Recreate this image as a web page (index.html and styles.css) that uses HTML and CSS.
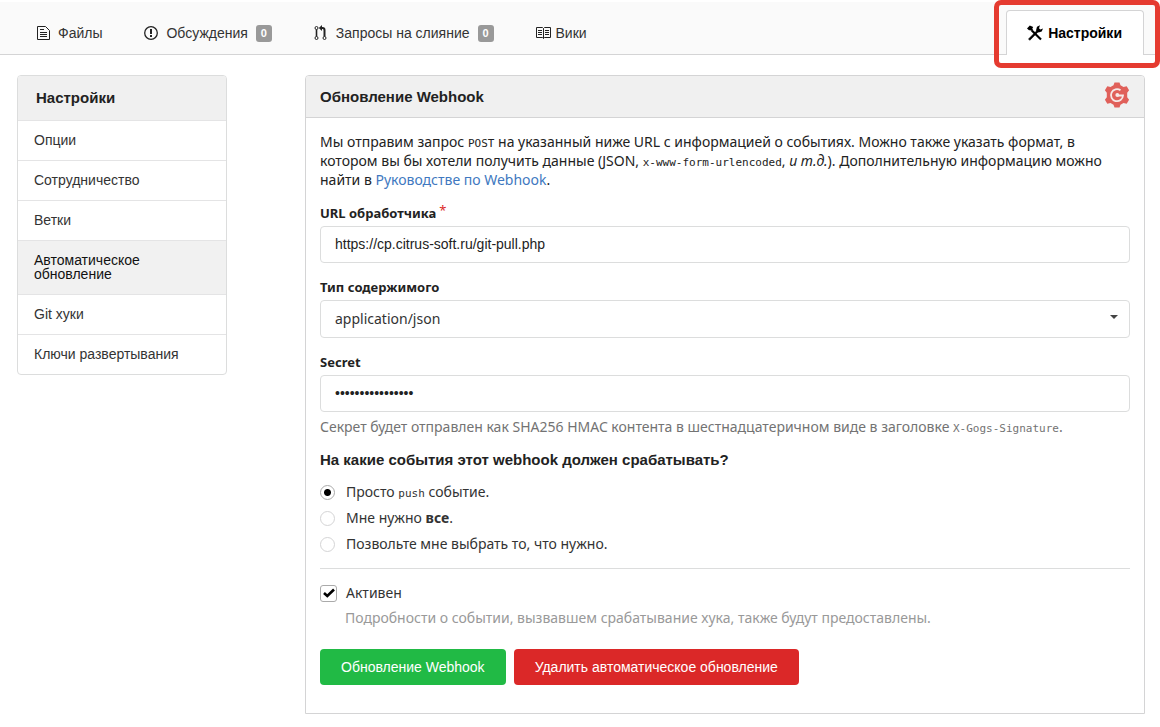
FILE: index.html
```html
<!DOCTYPE html>
<html lang="ru">
<head>
<meta charset="utf-8">
<title>Обновление Webhook</title>
<link rel="stylesheet" href="styles.css">
</head>
<body>
<nav class="repo-nav">
  <a class="nav-item" href="#"><svg class="icon" width="13" height="16" viewBox="0 0 13 16" fill="none" stroke="#222" stroke-width="1"><path d="M.5 1.500h8l4 4v9H.5z"/><path d="M3 4.500h4M3 7.500h7M3 9.500h7M3 11.500h7"/></svg>Файлы</a>
  <a class="nav-item" href="#"><svg class="icon" width="14" height="16" viewBox="0 0 14 16"><circle cx="7" cy="8" r="6.300" fill="none" stroke="#222" stroke-width="1.300"/><path d="M6 4h2v5H6zM6 10h2v2H6z" fill="#222"/></svg>Обсуждения<span class="badge">0</span></a>
  <a class="nav-item" href="#"><svg class="icon" width="14" height="16" viewBox="0 0 14 16" fill="none" stroke="#222"><circle cx="2.500" cy="3" r="1.500"/><circle cx="2.500" cy="13" r="1.500"/><circle cx="10.500" cy="13" r="1.500"/><path d="M2.500 4.500v7" stroke-width="1.600"/><path d="M10.500 11.500V5q0-2-2-2H7.500" stroke-width="2"/><path d="M8 0v6L4.800 3z" fill="#222" stroke="none"/></svg>Запросы на слияние<span class="badge">0</span></a>
  <a class="nav-item wiki" href="#"><svg class="icon" width="15" height="16" viewBox="0 0 15 16" fill="none" stroke="#222"><path d="M.5 2.500h6l1 1 1-1h6v10h-6l-1 1-1-1h-6zM7.500 3.500v10M2 5.500h4M2 7.500h4M2 9.500h4M9 5.500h4M9 7.500h4M9 9.500h4"/></svg>Вики</a>
  <a class="nav-item active" href="#"><svg class="icon" width="16" height="16" viewBox="0 0 16 16"><path d="M1.500 14 10 5.500l1.500 1L2.800 15.300z" fill="#000" stroke="#000" stroke-width=".6"/><path d="M9 5.500 10 1.800 13 .3 12 3.200l1.300 1.300L16 3.400 14.700 6.500 11.500 7.500z" fill="#000"/><path d="M0 3.400 2.800.6 6.200 2 5.300 3.500 6 4.600 4.400 6 3.300 5.300 2 5.300z" fill="#000"/><path d="M4.800 5.500 14 14.500" stroke="#000" stroke-width="2.200"/></svg>Настройки</a>
  <span class="highlight"></span>
</nav>

<main class="layout">
  <aside class="menu">
    <h2 class="menu-title">Настройки</h2>
    <a class="menu-item" href="#">Опции</a>
    <a class="menu-item" href="#">Сотрудничество</a>
    <a class="menu-item" href="#">Ветки</a>
    <a class="menu-item active" href="#">Автоматическое обновление</a>
    <a class="menu-item" href="#">Git хуки</a>
    <a class="menu-item" href="#">Ключи развертывания</a>
  </aside>

  <section class="panel">
    <header class="panel-head">
      <h1 class="heading">Обновление Webhook</h1>
      <svg class="logo" width="26" height="28" viewBox="0 0 26 28"><path d="M10.500 1.500h5l1 2.700 3 1.700 3.200-.7 2.400 4-1.900 2.500v4.600l1.900 2.500-2.400 4-3.200-.7-3 1.700-1 2.700h-5l-1-2.700-3-1.700-3.200.7-2.400-4 1.900-2.500v-4.600L.9 9.200l2.400-4 3.200.7 3-1.700z" fill="#e0605a"/><path d="M16.500 9.300A6 6 0 1 0 19 14.500h-5" fill="none" stroke="#f6e9e8" stroke-width="1.800"/><circle cx="13.300" cy="14" r="1.900" fill="#f6e9e8"/></svg>
    </header>
    <form class="panel-body">
      <p class="intro">Мы отправим запрос <code>POST</code> на указанный ниже URL с информацией о событиях. Можно также указать формат, в котором вы бы хотели получить данные (JSON, <code>x-www-form-urlencoded</code>, <em>и т.д.</em>). Дополнительную информацию можно найти в <a class="link" href="#">Руководстве по Webhook</a>.</p>

      <div class="field">
        <label class="label" for="url">URL обработчика<span class="required">*</span></label>
        <input class="control" id="url" type="text" value="https://cp.citrus-soft.ru/git-pull.php">
      </div>
      <div class="field">
        <label class="label" for="type">Тип содержимого</label>
        <div class="select-wrap">
          <select class="control select" id="type"><option>application/json</option></select>
          <svg class="caret" width="8" height="4" viewBox="0 0 8 4"><path d="M0 0h8L4 4z" fill="#444"/></svg>
        </div>
      </div>
      <div class="field">
        <label class="label" for="secret">Secret</label>
        <input class="control" id="secret" type="password" value="abcdefghijklmnop">
        <p class="help">Секрет будет отправлен как SHA256 HMAC контента в шестнадцатеричном виде в заголовке <code>X-Gogs-Signature</code>.</p>
      </div>

      <fieldset class="events">
        <legend class="heading">На какие события этот webhook должен срабатывать?</legend>
        <label class="choice"><input class="radio" type="radio" name="events" checked><span>Просто <code>push</code> событие.</span></label>
        <label class="choice"><input class="radio" type="radio" name="events"><span>Мне нужно <strong>все</strong>.</span></label>
        <label class="choice"><input class="radio" type="radio" name="events"><span>Позвольте мне выбрать то, что нужно.</span></label>
      </fieldset>

      <div class="active-field">
        <label class="choice"><span class="check-wrap"><input class="check" type="checkbox" checked><svg class="tick" width="12" height="10" viewBox="0 0 12 10"><path d="M1 5l3.300 3L11 1.500" fill="none" stroke="#000" stroke-width="2.600"/></svg></span><span>Активен</span></label>
        <p class="hint">Подробности о событии, вызвавшем срабатывание хука, также будут предоставлены.</p>
      </div>

      <div class="actions">
        <button class="button green" type="button">Обновление Webhook</button>
        <button class="button red" type="button">Удалить автоматическое обновление</button>
      </div>
    </form>
  </section>
</main>
</body>
</html>
```
FILE: styles.css
```css
* { box-sizing: border-box; }

body {
  margin: 0;
  background: #fff;
  color: #222;
  font: 14px/19px "Noto Sans", "Segoe UI", sans-serif;
}

h1, h2, p { margin: 0; }
a { text-decoration: none; }
code { font: 11px "DejaVu Sans Mono", monospace; }

.repo-nav {
  position: relative;
  display: flex;
  align-items: flex-end;
  gap: 42px;
  height: 53px;
  margin-top: 2px;
  padding: 0 16px 0 37px;
  background: #fafafa;
  border-bottom: 1px solid #d4d4d5;
  font-family: "Liberation Sans", Arial, sans-serif;
}

.nav-item {
  display: flex;
  align-items: center;
  gap: 8px;
  height: 42px;
  color: #333;
  white-space: nowrap;
}

.nav-item.wiki { gap: 5px; }

.nav-item.active {
  gap: 5px;
  height: 45px;
  margin: 0 0 -1px auto;
  padding: 0 21px 0 20px;
  background: #fff;
  border: 1px solid #d4d4d5;
  border-bottom: 0;
  border-radius: 4px 4px 0 0;
  color: #000;
  font-weight: bold;
}

.icon { flex: none; }

.badge {
  width: 16px;
  background: #999;
  border-radius: 3px;
  color: #fff;
  font-size: 11px;
  font-weight: bold;
  line-height: 17px;
  text-align: center;
}

.highlight {
  position: absolute;
  top: -2px;
  right: 0;
  width: 166px;
  height: 68px;
  border: 5px solid #e53b30;
  border-radius: 7px;
  pointer-events: none;
}

.layout {
  display: grid;
  grid-template-columns: 210px 1fr;
  gap: 78px;
  align-items: start;
  padding: 20px 15px 13px 17px;
}

.menu {
  border: 1px solid #dcdddd;
  border-radius: 4px;
  overflow: hidden;
  font-family: "Liberation Sans", Arial, sans-serif;
}

.menu-title {
  padding: 12px 18px 13px;
  background: #f0f0f0;
  font-size: 15px;
  line-height: 19px;
}

.menu-item {
  display: block;
  padding: 12px 16px 13px;
  border-top: 1px solid #e4e4e5;
  color: #333;
  line-height: 14px;
}

.menu-item.active {
  background: #f1f1f1;
  color: #111;
}

.panel {
  border: 1px solid #d4d4d5;
  border-radius: 4px 4px 0 0;
}

.panel-head {
  display: flex;
  align-items: center;
  justify-content: space-between;
  height: 42px;
  padding: 0 14px;
  background: #f0f0f0;
  border-bottom: 1px solid #d4d4d5;
  border-radius: 3px 3px 0 0;
}

.logo { margin-bottom: 3px; }

.heading {
  padding: 0;
  font: bold 15px/19px "Liberation Sans", Arial, sans-serif;
}

.panel-body { padding: 14px 14px 28px; }
.intro { margin-bottom: 14px; }
.link { color: #4078c0; }
.field { margin-bottom: 14px; }

.label {
  display: block;
  margin-bottom: 2px;
  font-size: 13px;
  font-weight: bold;
  line-height: 21px;
}

.required {
  margin-left: 3px;
  color: #db2828;
  font-weight: normal;
  vertical-align: 3px;
  line-height: 1px;
}

.control {
  display: block;
  width: 100%;
  height: 37px;
  padding: 0 14px 2px;
  background: #fff;
  border: 1px solid #dcdddd;
  border-radius: 4px;
  color: #222;
  font: 14px "Liberation Sans", Arial, sans-serif;
}

.select-wrap { position: relative; }

.select {
  height: 38px;
  appearance: none;
  color: #333;
  font-family: "Noto Sans", "Segoe UI", sans-serif;
}

.caret {
  position: absolute;
  top: 15px;
  right: 12px;
  pointer-events: none;
}

.help {
  margin-top: 5px;
  color: #737373;
}

.events {
  margin: 0;
  padding: 0 0 14px;
  border: 0;
  border-bottom: 1px solid #dcdddd;
}

.events .heading { margin-bottom: 13px; }

.choice {
  display: flex;
  align-items: center;
  gap: 11px;
  line-height: 20px;
  color: #333;
}

.choice + .choice { margin-top: 6px; }

.radio {
  appearance: none;
  width: 15px;
  height: 15px;
  margin: 0;
  border: 1px solid #d4d4d5;
  border-radius: 50%;
}

.radio:checked {
  border-color: #aaa;
  background: radial-gradient(circle, #000 0 3px, #fff 4px);
}

.active-field { padding-top: 14px; }
.active-field .choice { gap: 9px; }

.check-wrap {
  position: relative;
  width: 17px;
  height: 17px;
}

.check {
  display: block;
  appearance: none;
  width: 17px;
  height: 17px;
  margin: 0;
  border: 1px solid #aaa;
  border-radius: 3px;
}

.tick {
  position: absolute;
  top: 3px;
  left: 3px;
  pointer-events: none;
}

.hint {
  margin-top: 5px;
  padding-left: 25px;
  color: #999;
}

.actions {
  display: flex;
  gap: 8px;
  margin-top: 22px;
}

.button {
  height: 36px;
  padding: 0 21px;
  border: 0;
  border-radius: 4px;
  color: #fff;
  font: 14px "Liberation Sans", Arial, sans-serif;
}

.green { background: #21ba45; }
.red { background: #db2828; }
```
